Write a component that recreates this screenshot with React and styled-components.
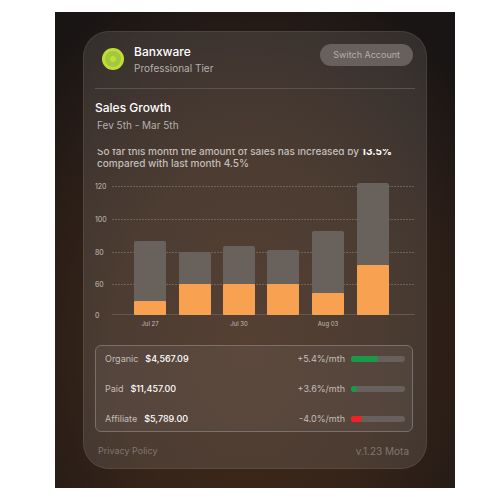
import React from 'react';
import styled, { createGlobalStyle } from 'styled-components';

const GlobalStyle = createGlobalStyle`
  * {
    box-sizing: border-box;
  }

  body {
    margin: 0;
    background-color: #fff;
    font-family: Inter, 'Open Sans', sans-serif;
  }
`;

const Page = styled.div`
  padding: 12px 45px 12px 55px;
`;

const Stage = styled.main`
  padding: 19px 28px;
  background: radial-gradient(ellipse 72% 82% at 48% 70%, #40291a 0%, #372519 45%, #291d17 75%, #191514 100%);
`;

const Card = styled.section`
  display: flex;
  flex-direction: column;
  padding: 0 11px 10px;
  border: 1px solid rgba(255, 255, 255, 0.08);
  border-radius: 26px;
  background-color: rgba(255, 255, 255, 0.11);
`;

const Header = styled.header`
  display: flex;
  align-items: flex-start;
  height: 57px;
  padding: 12px 2px 0 7px;
  border-bottom: 1px solid #5a534e;
`;

const Logo = styled.svg`
  width: 22px;
  height: 22px;
  margin-top: 4px;
`;

const Account = styled.div`
  flex: 1;
  margin-left: 10px;
`;

const AccountName = styled.h1`
  margin: 0;
  font-size: 12px;
  line-height: 16px;
  font-weight: 500;
  color: #fff;
`;

const Tier = styled.p`
  margin: 0;
  font-size: 10px;
  line-height: 16px;
  color: #b5b0ac;
`;

const SwitchButton = styled.button`
  height: 22px;
  padding: 0 13px;
  border: 0;
  border-radius: 11px;
  background-color: #68605c;
  color: #b5afab;
  font-family: inherit;
  font-size: 9px;
  line-height: 12px;
`;

const Title = styled.h2`
  margin: 11px 0 0;
  font-size: 12px;
  line-height: 16px;
  font-weight: 500;
  color: #fff;
`;

const Period = styled.p`
  margin: 3px 0 0 2px;
  font-size: 10px;
  line-height: 12px;
  color: #b5b0ac;
`;

const SummaryClip = styled.div`
  overflow: hidden;
  margin: 18px 0 0 2px;
`;

// the first line is partly scrolled under the clip edge
const Summary = styled.p`
  margin: -4px 0 0;
  font-size: 10px;
  line-height: 12px;
  font-weight: 500;
  color: #c4beb9;

  strong {
    font-weight: 700;
    color: #fff;
  }
`;

const Chart = styled.svg`
  display: block;
  width: 100%;
  margin-top: 8px;

  text {
    font-size: 7px;
    fill: #c4beb9;
  }

  .day {
    font-size: 6px;
    text-anchor: middle;
  }
`;

const Sources = styled.ul`
  display: flex;
  flex-direction: column;
  gap: 17px;
  margin: 12px 2px 0 0;
  padding: 6px 7px 6px 9px;
  list-style: none;
  border: 1px solid #77706b;
  border-radius: 6px;
  background-color: rgba(255, 255, 255, 0.05);
`;

const Source = styled.li`
  display: flex;
  align-items: center;
  height: 13px;
  font-size: 9px;
  line-height: 13px;
  color: #c4beb9;
`;

const Amount = styled.span`
  flex: 1;
  margin-left: 7px;
  font-weight: 500;
  color: #fff;
`;

const Track = styled.div`
  width: 54px;
  height: 6px;
  margin-left: 6px;
  border-radius: 3px;
  background-color: #68605c;
`;

const Fill = styled.div`
  height: 6px;
  border-radius: 3px;
  background-color: ${props => props.$color};
`;

const Footer = styled.footer`
  display: flex;
  justify-content: space-between;
  margin-top: 12px;
  padding: 0 6px 0 3px;
  font-size: 9px;
  line-height: 14px;
  color: #80766f;

  a {
    color: inherit;
    text-decoration: none;
  }
`;

const Version = styled.span`
  font-size: 10px;
`;

const BASELINE = 138;

const gridLines = [
  { label: '120', y: 9 },
  { label: '100', y: 42 },
  { label: '80', y: 75 },
  { label: '60', y: 107 },
];

const bars = [
  { x: 39, total: 74, part: 14, day: 'Jul 27' },
  { x: 84, total: 63, part: 31 },
  { x: 128, total: 69, part: 31, day: 'Jul 30' },
  { x: 172, total: 65, part: 31 },
  { x: 217, total: 84, part: 22, day: 'Aug 03' },
  { x: 262, total: 132, part: 50 },
];

const sources = [
  { name: 'Organic', amount: '$4,567.09', change: '+5.4%/mth', fill: 50, color: '#1a9a48' },
  { name: 'Paid', amount: '$11,457.00', change: '+3.6%/mth', fill: 12, color: '#1a9a48' },
  { name: 'Affiliate', amount: '$5,789.00', change: '-4.0%/mth', fill: 20, color: '#f22025' },
];

const SalesChart = () => (
  <Chart viewBox="0 0 320 156" role="img" aria-label="Sales growth">
    {gridLines.map(line => (
      <g key={line.label}>
        <text x="0" y={line.y + 3}>{line.label}</text>
        <path d={`M17 ${line.y + 0.5}H320`} stroke="#6e635a" strokeDasharray="2 1" />
      </g>
    ))}
    <text x="0" y={BASELINE + 3}>0</text>
    <path d={`M17 ${BASELINE - 0.5}H320`} stroke="#655850" />
    {bars.map(bar => (
      <g key={bar.x}>
        <rect x={bar.x} y={BASELINE - bar.total} width="32" height={bar.total} rx="2" fill="#69615c" />
        <rect x={bar.x} y={BASELINE - bar.part} width="32" height={bar.part} rx="1" fill="#f7a151" />
        {bar.day && <text className="day" x={bar.x + 16} y="149">{bar.day}</text>}
      </g>
    ))}
  </Chart>
);

const App = () => (
  <Page>
    <GlobalStyle />
    <Stage>
      <Card>
        <Header>
          <Logo viewBox="0 0 22 22" aria-hidden="true">
            <circle cx="11" cy="11" r="11" fill="#c4dc37" />
            <circle cx="11" cy="11" r="8" fill="#a0c93b" />
            <circle cx="11" cy="11" r="3" fill="#c4dc37" />
          </Logo>
          <Account>
            <AccountName>Banxware</AccountName>
            <Tier>Professional Tier</Tier>
          </Account>
          <SwitchButton type="button">Switch Account</SwitchButton>
        </Header>

        <Title>Sales Growth</Title>
        <Period>Fev 5th - Mar 5th</Period>

        <SummaryClip>
          <Summary>
            So far this month the amount of sales has increased by <strong>13.5%</strong> compared
            with last month 4.5%
          </Summary>
        </SummaryClip>

        <SalesChart />

        <Sources>
          {sources.map(source => (
            <Source key={source.name}>
              <span>{source.name}</span>
              <Amount>{source.amount}</Amount>
              <span>{source.change}</span>
              <Track>
                <Fill $color={source.color} style={{ width: `${source.fill}%` }} />
              </Track>
            </Source>
          ))}
        </Sources>

        <Footer>
          <a href="#privacy">Privacy Policy</a>
          <Version>v.1.23 Mota</Version>
        </Footer>
      </Card>
    </Stage>
  </Page>
);

export default App;
